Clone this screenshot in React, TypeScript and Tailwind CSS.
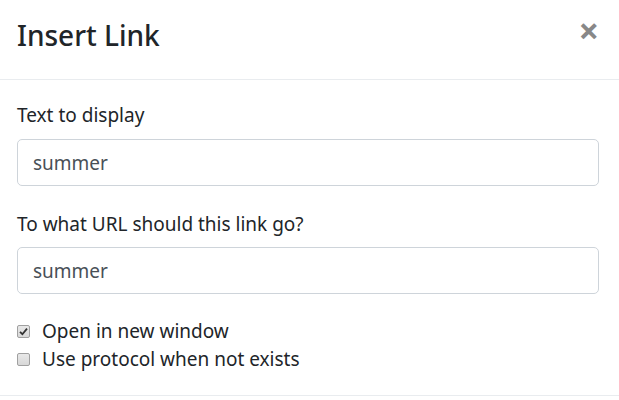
import React, { useState } from 'react';

const Check: React.FC<{ checked: boolean; onChange: (v: boolean) => void; label: string }> = ({ checked, onChange, label }) => (
  <label className="flex items-center h-[28px] text-[19px] cursor-pointer">
    <span className="relative w-[13px] h-[13px] mr-[12px] rounded-[2px] border border-[#a0a0a0] bg-gradient-to-b from-[#e8e8e8] to-[#d8d8d8] flex items-center justify-center">
      <input type="checkbox" className="absolute inset-0 opacity-0 m-0" checked={checked} onChange={(e) => onChange(e.target.checked)} />
      {checked && (
        <svg width="9" height="9" viewBox="0 0 9 9">
          <path d="M1 4.8 L3.4 7.2 L8 1.6" fill="none" stroke="#333" strokeWidth="1.8" />
        </svg>
      )}
    </span>
    {label}
  </label>
);

const App: React.FC = () => {
  const [text, setText] = useState('summer');
  const [url, setUrl] = useState('summer');
  const [newWindow, setNewWindow] = useState(true);
  const [useProtocol, setUseProtocol] = useState(false);

  return (
    <div className="w-[619px] h-[400px] bg-white text-[#212529] overflow-hidden" style={{ fontFamily: '"Noto Sans", "Open Sans", sans-serif' }}>
      {/* Header */}
      <div className="h-[80px] flex items-center justify-between pl-[17px] pr-[22px] border-b border-[#e9ecef]">
        <h5 className="text-[28px] font-medium leading-none pb-[10px]">Insert Link</h5>
        <button type="button" className="text-[36px] leading-none font-bold text-[#888] pb-[18px] -mr-[2px]" aria-label="Close">
          ×
        </button>
      </div>

      {/* Body */}
      <div className="pl-[17px] pr-[20px] pt-[21px] h-[316px] border-b border-[#e9ecef]">
        <label className="block text-[19px] leading-[28px]">Text to display</label>
        <input
          className="mt-[10px] w-full h-[47px] px-[15px] text-[19px] text-[#495057] border border-[#ced4da] rounded-[5px] outline-none"
          value={text}
          onChange={(e) => setText(e.target.value)}
        />

        <label className="block mt-[24px] text-[19px] leading-[28px]">To what URL should this link go?</label>
        <input
          className="mt-[9px] w-full h-[47px] px-[15px] text-[19px] text-[#495057] border border-[#ced4da] rounded-[5px] outline-none"
          value={url}
          onChange={(e) => setUrl(e.target.value)}
        />

        <div className="mt-[23px] flex flex-col">
          <Check checked={newWindow} onChange={setNewWindow} label="Open in new window" />
          <Check checked={useProtocol} onChange={setUseProtocol} label="Use protocol when not exists" />
        </div>
      </div>
    </div>
  );
};

export default App;
